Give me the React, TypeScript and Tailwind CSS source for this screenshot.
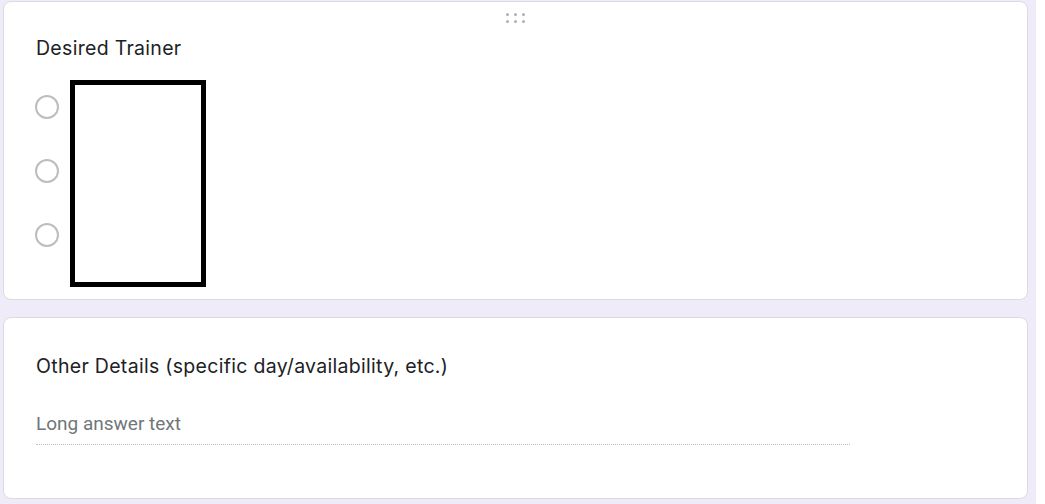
import React from "react";

const titleFont = { fontFamily: "Inter, 'Liberation Sans', sans-serif" };

function DragHandle() {
  return (
    <div className="flex justify-center pt-[11px]">
      <div className="grid grid-cols-3 gap-x-[5px] gap-y-[4px]">
        {Array.from({ length: 6 }).map((_, i) => (
          <span key={i} className="h-[3px] w-[3px] rounded-full bg-[#b0b0b0]" />
        ))}
      </div>
    </div>
  );
}

function Radio() {
  return <span className="block h-[24px] w-[24px] rounded-full border-2 border-[#bdbdbd]" />;
}

export default function App() {
  return (
    <div className="flex h-[504px] w-[1045px] overflow-hidden bg-white">
      <div className="flex w-[1036px] flex-col gap-[17px] bg-[#f0ebf8] pl-[3px] pr-[8px] pt-px">
        {/* Desired Trainer */}
        <section className="h-[299px] shrink-0 rounded-[8px] border border-[#dadce0] bg-white">
          <DragHandle />
          <div className="px-[32px]">
            <h2
              className="mt-[13px] text-[19.5px] leading-[24px] tracking-[0.3px] text-[#202124]"
              style={titleFont}
            >
              Desired Trainer
            </h2>
            <div className="mt-[20px] flex items-start">
              <div className="-ml-[1px] flex flex-col gap-[40px] pt-[15px]">
                <Radio />
                <Radio />
                <Radio />
              </div>
              <div className="ml-[11px] h-[207px] w-[136px] border-[5px] border-black bg-white" />
            </div>
          </div>
        </section>

        {/* Other Details */}
        <section className="h-[182px] shrink-0 rounded-[8px] border border-[#dadce0] bg-white px-[32px] pt-[36px]">
          <h2
            className="text-[19.5px] leading-[24px] tracking-[0.3px] text-[#202124]"
            style={titleFont}
          >
            Other Details (specific day/availability, etc.)
          </h2>
          <div className="mt-[34px] w-[814px] border-b border-dotted border-[#bdbdbd] pb-[8px]">
            <span className="font-['Roboto',sans-serif] text-[19px] leading-[24px] text-[#70757a]">
              Long answer text
            </span>
          </div>
        </section>
      </div>
    </div>
  );
}
